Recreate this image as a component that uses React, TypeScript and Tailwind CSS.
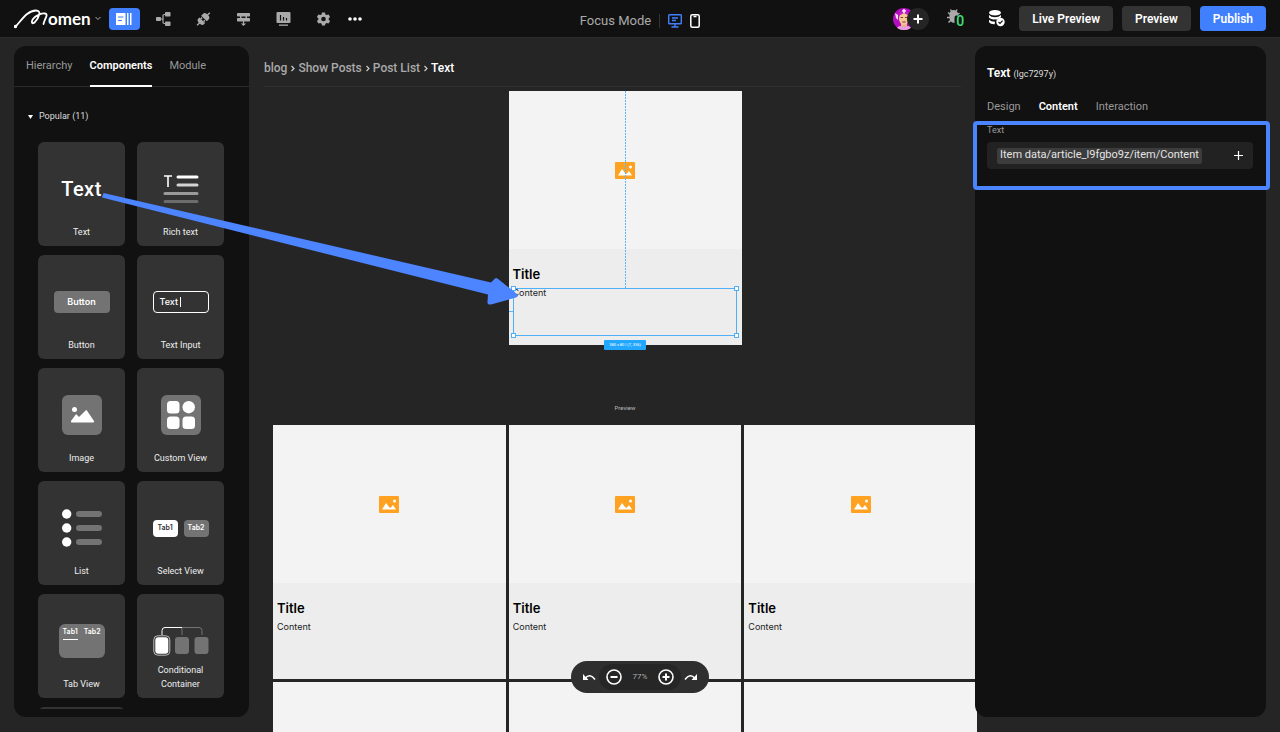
import type { ReactNode } from "react";

const popular: { name: string; art: ReactNode }[] = [
  {
    name: "Text",
    art: <span className="text-xl font-medium tracking-wide">Text</span>,
  },
  {
    name: "Rich text",
    art: (
      <svg width="36" height="32" viewBox="0 0 36 32" fill="none" strokeLinecap="round" strokeWidth="3">
        <path d="M1 3h8M5 3v11" stroke="#fff" strokeWidth="1.600" strokeLinecap="butt" />
        <path d="M15 4h19" stroke="#fff" />
        <path d="M15 12h19" stroke="#d4d4d4" />
        <path d="M2 20.500h32" stroke="#9a9a9a" />
        <path d="M2 28.500h32" stroke="#6c6c6c" />
      </svg>
    ),
  },
  {
    name: "Button",
    art: (
      <span className="flex h-[22px] w-14 items-center justify-center rounded bg-[#737373] font-[Inter] text-[9px] font-semibold">
        Button
      </span>
    ),
  },
  {
    name: "Text Input",
    art: (
      <span className="flex h-[22px] w-14 items-center gap-0.5 rounded border border-white px-1.5 font-[Inter] text-[9px] font-medium">
        Text
        <span className="h-2.5 w-px bg-white" />
      </span>
    ),
  },
  {
    name: "Image",
    art: (
      <svg width="40" height="40" viewBox="0 0 40 40">
        <rect width="40" height="40" rx="6" fill="#737373" />
        <circle cx="12.500" cy="14.500" r="2.500" fill="#fff" />
        <path d="M9 26l4.600-6.300q.6-.8 1.200 0l2.200 2.400 6.600-6.700q.7-.7 1.300.2L32 26q.5 1.500-1 1.500H10q-1.500 0-1-1.500z" fill="#fff" />
      </svg>
    ),
  },
  {
    name: "Custom View",
    art: (
      <svg width="40" height="40" viewBox="0 0 40 40" fill="#fff">
        <rect width="40" height="40" rx="6" fill="#737373" />
        <rect x="6" y="6" width="12.500" height="12.500" rx="3.500" />
        <circle cx="27.700" cy="12.200" r="6.200" />
        <rect x="6" y="21.500" width="12.500" height="12.500" rx="3.500" />
        <rect x="21.500" y="21.500" width="12.500" height="12.500" rx="3.500" />
      </svg>
    ),
  },
  {
    name: "List",
    art: (
      <svg width="40" height="38" viewBox="0 0 40 38">
        {[5, 19, 33].map((y) => (
          <g key={y}>
            <circle cx="4.700" cy={y} r="4.700" fill="#fff" />
            <rect x="14" y={y - 3} width="26" height="6" rx="3" fill="#737373" />
          </g>
        ))}
      </svg>
    ),
  },
  {
    name: "Select View",
    art: (
      <span className="flex gap-1.5 font-[Inter] text-[7px] font-semibold">
        <span className="flex h-[17px] w-[25px] items-center justify-center rounded bg-white text-[#333]">Tab1</span>
        <span className="flex h-[17px] w-[25px] items-center justify-center rounded bg-[#737373]">Tab2</span>
      </span>
    ),
  },
  {
    name: "Tab View",
    art: (
      <span className="flex h-[34px] w-[46px] justify-between rounded-md bg-[#737373] px-1 pt-1 font-[Inter] text-[7px] leading-[8px] font-semibold">
        <span className="h-3 border-b border-white">Tab1</span>
        <span>Tab2</span>
      </span>
    ),
  },
  {
    name: "Conditional Container",
    art: (
      <svg width="56" height="30" viewBox="0 0 56 30" fill="none">
        <path d="M29 9V1.500H46q3 0 3 3V9" stroke="#737373" />
        <path d="M9 9V4.500q0-3 3-3h17" stroke="#fff" />
        <rect x=".8" y="9.800" width="16" height="19.400" rx="4" stroke="#bbb" />
        <rect x="2.300" y="11.300" width="13" height="16.500" rx="3" fill="#fff" />
        <rect x="22" y="11" width="14" height="17" rx="3" fill="#737373" />
        <rect x="41.500" y="11" width="14" height="17" rx="3" fill="#737373" />
      </svg>
    ),
  },
  { name: "", art: null },
];

const crumbs = ["blog", "Show Posts", "Post List"];

const Logo = () => (
  <a href="#" aria-label="Momen" className="flex h-6 items-center text-white">
    <svg width="34" height="20" viewBox="0 0 34 20" fill="none" stroke="currentColor" strokeWidth="1.800" strokeLinecap="round" strokeLinejoin="round">
      <path d="M1 18C6 14 12 1.500 22 1.500c6 0 3 7-1 11.500-3 3-4 0-2-3C22 6 28 4 31 4.500c4 .7-.5 5.500-1.500 10.500" />
      <circle cx="1.500" cy="17.500" r=".8" />
    </svg>
    <span className="font-[Lato] text-[17px] font-bold">omen</span>
    <svg width="6" height="5" viewBox="0 0 6 5" className="ml-1" fill="none" stroke="#aaa">
      <path d="M.5 1L3 3.500 5.500 1" />
    </svg>
  </a>
);

const navIcons = [
  {
    label: "Actionflow",
    icon: (
      <>
        <rect x="0" y="5" width="5" height="4" rx=".8" />
        <rect x="9" y="0" width="5.500" height="4.500" rx=".8" />
        <rect x="9" y="9.500" width="5.500" height="4.500" rx=".8" />
        <path d="M4 7h3M10 2.500H8.200Q7 2.500 7 3.700v6.600Q7 11.500 8.200 11.500H10" fill="none" stroke="currentColor" strokeWidth="1.200" />
      </>
    ),
  },
  {
    label: "API",
    icon: (
      <g transform="rotate(45 7.500 7)">
        <path d="M3.500 6.300V3.800Q3.500 1 7.500 1t4 2.800v2.500z" />
        <path d="M6.800-2h1.400V2H6.800z" />
        <path d="M3.500 8.800v1.500Q3.500 13 7.500 13t4-2.700V8.800zM4.800 7h1.500v2H4.800zM8.700 7h1.500v2H8.700z" />
        <path d="M6.800 12h1.400v4H6.800z" />
      </g>
    ),
  },
  {
    label: "Data model",
    icon: (
      <>
        <rect x="1" y="1" width="13" height="3.500" rx=".8" />
        <rect x="1" y="6" width="13" height="3.500" rx=".8" />
        <path d="M4 4h1.500v2H4zM9.500 4H11v2H9.500zM6.900 9h1.200v2.500h2l-2.600 2.500-2.600-2.500h2z" />
      </>
    ),
  },
  {
    label: "Analytics",
    icon: (
      <>
        <path d="M1.500 0h12q1 0 1 1v9q0 1-1 1h-12q-1 0-1-1V1q0-1 1-1z" />
        <path d="M3 12.500h9v1.300H3z" />
        <path d="M4.500 3v5.500M7.500 5v3.500M10.500 6v2.500" stroke="#111" strokeWidth="1.200" />
      </>
    ),
  },
  {
    label: "Settings",
    icon: (
      <path
        fillRule="evenodd"
        d="M6 .5h3l.4 1.900 1.300.7 1.900-.6 1.500 2.500L12.700 6.300v1.400l1.400 1.300-1.500 2.500-1.900-.6-1.300.8-.4 1.800H6l-.4-1.800-1.300-.8-1.900.6L.9 9l1.400-1.300V6.300L.9 5l1.500-2.500 1.900.6 1.300-.7zM7.500 4.700a2.300 2.300 0 100 4.600 2.300 2.300 0 000-4.600z"
      />
    ),
  },
];

const Header = () => (
  <header className="grid h-[38px] shrink-0 grid-cols-[1fr_auto_1fr] items-center border-b border-[#2b2b2b] bg-[#111] px-3.5 text-[#aaa]">
    <div className="flex items-center">
      <Logo />
      <nav className="ml-2 flex items-center">
        <button aria-label="Editor" className="mr-4 flex h-[22px] w-[31px] items-center justify-center rounded bg-[#4080ff] text-white">
          <svg width="16" height="12" viewBox="0 0 16 12" fill="currentColor">
            <rect width="9.500" height="12" rx=".5" />
            <rect x="11" width="1.500" height="12" />
            <rect x="14" width="1.500" height="12" />
            <path d="M2 4h5.500M2 7.500h4" stroke="#4080ff" strokeWidth="1.200" />
          </svg>
        </button>
        <div className="flex items-center gap-[25px]">
          {navIcons.map(({ label, icon }) => (
            <button key={label} aria-label={label}>
              <svg width="15" height="14" viewBox="0 0 15 14" fill="currentColor" overflow="visible">
                {icon}
              </svg>
            </button>
          ))}
        </div>
        <button aria-label="More" className="ml-[17px] text-white">
          <svg width="14" height="4" viewBox="0 0 14 4" fill="currentColor">
            <circle cx="2" cy="2" r="1.800" />
            <circle cx="7" cy="2" r="1.800" />
            <circle cx="12" cy="2" r="1.800" />
          </svg>
        </button>
      </nav>
    </div>

    <div className="flex items-center pt-1 text-[13px]">
      <span>Focus Mode</span>
      <span className="mx-2 h-3.5 w-px bg-[#333]" />
      <button aria-label="Desktop">
        <svg width="14" height="14" viewBox="0 0 14 14" fill="none" stroke="#4080ff" strokeWidth="1.400">
          <rect x=".7" y=".7" width="12.600" height="9" rx=".8" />
          <path d="M4 4h6M4 6.500h4M7 10v3M3.500 13h7" />
        </svg>
      </button>
      <button aria-label="Mobile" className="ml-2">
        <svg width="10" height="14" viewBox="0 0 10 14" fill="none" stroke="#fff" strokeWidth="1.500">
          <rect x=".8" y=".8" width="8.400" height="12.400" rx="1.500" />
          <path d="M3.500 2.500h3" />
        </svg>
      </button>
    </div>

    <div className="flex items-center justify-end">
      <svg width="22" height="22" viewBox="0 0 22 22" role="img" aria-label="Avatar">
        <clipPath id="avatar">
          <circle cx="11" cy="11" r="11" />
        </clipPath>
        <g clipPath="url(#avatar)">
          <rect width="22" height="22" fill="#b40cc0" />
          <path d="M2 5l3 2v5l-2-2zM20 5l-3 2v5l2-2z" fill="#f3d6f5" />
          <path d="M8 15h6v3l4 2v2H4v-2l4-2z" fill="#e8b27c" />
          <path d="M3 22q1-4 5-4l3 1.500 3-1.500q4 0 5 4z" fill="#e79be9" />
          <ellipse cx="11" cy="10.500" rx="5" ry="6.500" fill="#f6c894" />
          <path d="M5.500 8Q6 3 11 3t5.500 5L11 5z" fill="#c01fc6" />
          <path d="M10.300 1h1.400v4h-1.400zM9 2.300h4v1.200H9z" fill="#fff" />
          <path d="M7.500 9.500h2.500M12 9.500h2.500M9.300 14h3.400" stroke="#7a3f35" />
        </g>
      </svg>
      <button aria-label="Invite" className="-ml-2 flex size-[22px] items-center justify-center rounded-full bg-[#252525] text-white">
        <svg width="10" height="10" viewBox="0 0 10 10" stroke="currentColor" strokeWidth="2">
          <path d="M5 .5v9M.5 5h9" />
        </svg>
      </button>
      <button aria-label="Issues" className="ml-[18px] flex">
        <svg width="13" height="15" viewBox="0 0 13 15" fill="currentColor">
          <path d="M4.500 2.500L3.500.5M9 2.500L10 .5M3.500 5.500L1 3.500M3 8.500H0M4 11L1.500 13.500M10 6l2.500-2" stroke="currentColor" strokeWidth="1.500" />
          <path d="M6.500 1q3.500 0 4.500 3.500V6.500H9Q7.500 6.500 7.500 9v5Q2.500 13.500 2.500 8.500v-4Q3.500 1 6.500 1z" />
        </svg>
        <span className="-ml-1 pt-1 text-[14px] leading-4 font-medium text-[#3fe07c]">0</span>
      </button>
      <button aria-label="Database sync" className="ml-6 text-white">
        <svg width="17" height="17" viewBox="0 0 17 17" fill="currentColor">
          <ellipse cx="7" cy="2.800" rx="6" ry="2.800" />
          <path d="M1 5q2 2.200 6 2.200T13 5v2.200L8.500 9.500Q3 9.800 1 7.500zM1 9.700q2 2 6 2.100l-.3 2.500Q2.500 14.500 1 12.300z" />
          <circle cx="12.500" cy="12" r="4.200" />
          <path d="M10.500 12l1.500 1.400 2.600-2.700" fill="none" stroke="#111" strokeWidth="1.200" />
        </svg>
      </button>
      <button className="ml-3.5 h-[25px] rounded bg-[#333] px-[13px] text-[12px] font-semibold text-white">Live Preview</button>
      <button className="ml-[9px] h-[25px] rounded bg-[#333] px-[13px] text-[12px] font-semibold text-white">Preview</button>
      <button className="ml-[9px] h-[25px] rounded bg-[#4080ff] px-[13px] text-[12px] font-semibold text-white">Publish</button>
    </div>
  </header>
);

const Sidebar = () => (
  <aside className="flex w-[235px] shrink-0 flex-col overflow-hidden rounded-xl bg-[#111] pb-2">
    <nav className="flex h-[41px] shrink-0 gap-[17px] border-b border-[#2b2b2b] px-3 text-[11px] text-[#999]">
      <button>Hierarchy</button>
      <button className="-mb-px border-b-2 border-white pt-0.5 font-semibold text-white">Components</button>
      <button>Module</button>
    </nav>
    <div className="min-h-0 flex-1 overflow-hidden pr-[25px] pl-6">
      <button className="-ml-2.5 mt-5 flex h-5 items-center gap-1.5 text-[9px] text-[#ddd]">
        <svg width="5" height="4" viewBox="0 0 5 4" fill="#fff">
          <path d="M0 0h5L2.500 4z" />
        </svg>
        Popular (11)
      </button>
      <div className="mt-[15px] grid grid-cols-2 gap-x-3 gap-y-[9px]">
        {popular.map(({ name, art }) => (
          <div key={name} className="flex h-[104px] flex-col items-center rounded-md bg-[#333] pt-[27px] pb-[7px] text-white">
            <div className="flex h-10 items-center">{art}</div>
            <span className="mt-auto w-16 text-center text-[9px] leading-[14px] text-[#eee]">{name}</span>
          </div>
        ))}
      </div>
    </div>
  </aside>
);

const ImageIcon = () => (
  <svg width="20" height="17" viewBox="0 0 20 17">
    <rect width="20" height="17" rx="1" fill="#ffa222" />
    <path d="M3 13.500L7 7l3 4 1.500 1L14 9l3 4.500z" fill="#fff" />
    <circle cx="15.500" cy="5" r="1.500" fill="#fff" />
  </svg>
);

const PostCard = ({ children }: { children?: ReactNode }) => (
  <article className="relative flex h-[254px] flex-col bg-[#ededed] font-[Inter] text-black">
    <div className="flex h-[158px] items-center justify-center bg-[#f3f3f3]">
      <ImageIcon />
    </div>
    <h3 className="px-1 pt-[15px] text-[13px] leading-5 font-semibold">Title</h3>
    <p className="px-1 pt-px text-[9px] leading-4 text-[#222]">Content</p>
    {children}
  </article>
);

const Selection = () => (
  <>
    <div className="absolute top-0 left-1/2 h-[197px] w-px bg-[repeating-linear-gradient(#5cb5f8_0_2px,transparent_2px_3px)]" />
    <div className="absolute top-[220px] left-0 w-1 border-t border-dashed border-[#5cb5f8]" />
    <div className="absolute top-[197px] right-[5px] left-1 h-12 border border-[#4fb0f8]">
      <i className="absolute -top-[3px] -left-[3px] size-[5px] border border-[#4fb0f8] bg-white" />
      <i className="absolute -top-[3px] -right-[3px] size-[5px] border border-[#4fb0f8] bg-white" />
      <i className="absolute -bottom-[3px] -left-[3px] size-[5px] border border-[#4fb0f8] bg-white" />
      <i className="absolute -right-[3px] -bottom-[3px] size-[5px] border border-[#4fb0f8] bg-white" />
    </div>
    <span className="absolute top-[249px] left-1/2 flex h-2.5 w-[42px] -translate-x-1/2 items-center justify-center rounded-[1px] bg-[#22a7ff] font-[Roboto] text-[4px] whitespace-nowrap text-white">
      380 x 80 | (7, 336)
    </span>
  </>
);

const Canvas = () => (
  <main className="flex min-w-0 flex-1 flex-col">
    <nav className="mr-3.5 ml-[15px] flex h-[41px] shrink-0 items-center gap-[3px] border-b border-[#303030] pt-1 text-[12px] font-medium text-[#aaa]">
      {crumbs.map((crumb) => (
        <span key={crumb} className="flex items-center gap-1">
          <a href="#">{crumb}</a>
          <svg width="4" height="7" viewBox="0 0 4 7" fill="none" stroke="#ccc" strokeWidth="1.200">
            <path d="M.5 1L3 3.500.5 6" />
          </svg>
        </span>
      ))}
      <span className="text-white">Text</span>
    </nav>
    <div className="-mr-0.5 pt-1 pl-6">
      <div className="mx-auto w-[233px]">
        <PostCard>
          <Selection />
        </PostCard>
      </div>
      <h2 className="mt-[57px] text-center text-[6px] leading-3 text-[#bbb]">Preview</h2>
      <div className="mt-[11px] grid grid-cols-3 gap-[3px]">
        {[1, 2, 3].map((n) => (
          <PostCard key={n} />
        ))}
        {[4, 5, 6].map((n) => (
          <div key={n} className="h-[158px] bg-[#f3f3f3]" />
        ))}
      </div>
    </div>
  </main>
);

const Inspector = () => (
  <aside className="relative z-10 flex w-[291px] shrink-0 flex-col rounded-xl bg-[#111]">
    <h2 className="mt-[18px] px-3 text-[12px] leading-[18px] font-semibold text-white">
      Text <span className="text-[9px] font-normal text-[#ddd]">(lgc7297y)</span>
    </h2>
    <nav className="mt-4 flex gap-[18px] px-3 text-[11px] leading-4 text-[#999]">
      <button>Design</button>
      <button className="font-semibold text-white">Content</button>
      <button>Interaction</button>
    </nav>
    <section className="-mr-1 -ml-0.5 mt-1.5 h-[69px] rounded border-4 border-[#4a84ff] pr-[13px] pl-2.5">
      <label htmlFor="text-source" className="block text-[9px] leading-[10px] text-[#999]">
        Text
      </label>
      <div className="mt-[7px] flex h-[27px] items-center justify-between rounded bg-[#222] px-2.5">
        <input
          id="text-source"
          readOnly
          defaultValue="Item data/article_l9fgbo9z/item/Content"
          className="field-sizing-content h-4 rounded-xs bg-[#3c3c3c] px-[3px] text-[11px] text-[#e5e5e5] outline-none"
        />
        <button aria-label="Add data">
          <svg width="9" height="9" viewBox="0 0 9 9" stroke="#fff" strokeWidth="1.200">
            <path d="M4.500 0v9M0 4.500h9" />
          </svg>
        </button>
      </div>
    </section>
  </aside>
);

const ZoomBar = () => (
  <div className="absolute bottom-[39px] left-1/2 z-20 flex h-8 w-[138px] -translate-x-1/2 items-center justify-between rounded-full bg-[#2f2f2f] px-3 text-white">
    <button aria-label="Undo">
      <svg width="13" height="8" viewBox="0 0 13 8" fill="none" stroke="currentColor" strokeWidth="1.500">
        <path d="M2 5.500Q7-.5 12 6.500" />
        <path d="M0 1v6h5.500z" fill="currentColor" stroke="none" />
      </svg>
    </button>
    <div className="flex h-[26px] w-[82px] items-center justify-between rounded-full bg-[#262626] px-[7px]">
      <button aria-label="Zoom out">
        <svg width="16" height="16" viewBox="0 0 16 16" fill="none" stroke="currentColor" strokeWidth="1.600">
          <circle cx="8" cy="8" r="7" />
          <path d="M4.500 8h7" strokeWidth="2" />
        </svg>
      </button>
      <span className="text-[8px] text-[#aaa]">77%</span>
      <button aria-label="Zoom in">
        <svg width="16" height="16" viewBox="0 0 16 16" fill="none" stroke="currentColor" strokeWidth="1.600">
          <circle cx="8" cy="8" r="7" />
          <path d="M4.500 8h7M8 4.500v7" strokeWidth="2" />
        </svg>
      </button>
    </div>
    <button aria-label="Redo">
      <svg width="13" height="8" viewBox="0 0 13 8" fill="none" stroke="currentColor" strokeWidth="1.500">
        <path d="M11 5.500Q6-.5 1 6.500" />
        <path d="M13 1v6H7.500z" fill="currentColor" stroke="none" />
      </svg>
    </button>
  </div>
);

// Points from the Text component to its place on the canvas
const DragArrow = () => (
  <svg className="pointer-events-none absolute top-[190px] left-[100px] z-30" width="420" height="116" viewBox="0 0 420 116" fill="#4d84ff">
    <path d="M3.500 3L391 92.500l3-3q1.500-2.500 3.500-1L417 104q2 2.500-1 3.500L391 114.500q-4 .5-3.500-3l.5-7L2 7.500z" />
  </svg>
);

const App = () => (
  <div className="relative flex h-screen flex-col overflow-hidden bg-[#252525] font-[Roboto,sans-serif]">
    <Header />
    <div className="flex min-h-0 flex-1 px-3.5 pt-2">
      <div className="flex pb-[15px]">
        <Sidebar />
      </div>
      <Canvas />
      <div className="flex pb-[15px]">
        <Inspector />
      </div>
    </div>
    <ZoomBar />
    <DragArrow />
  </div>
);

export default App;
